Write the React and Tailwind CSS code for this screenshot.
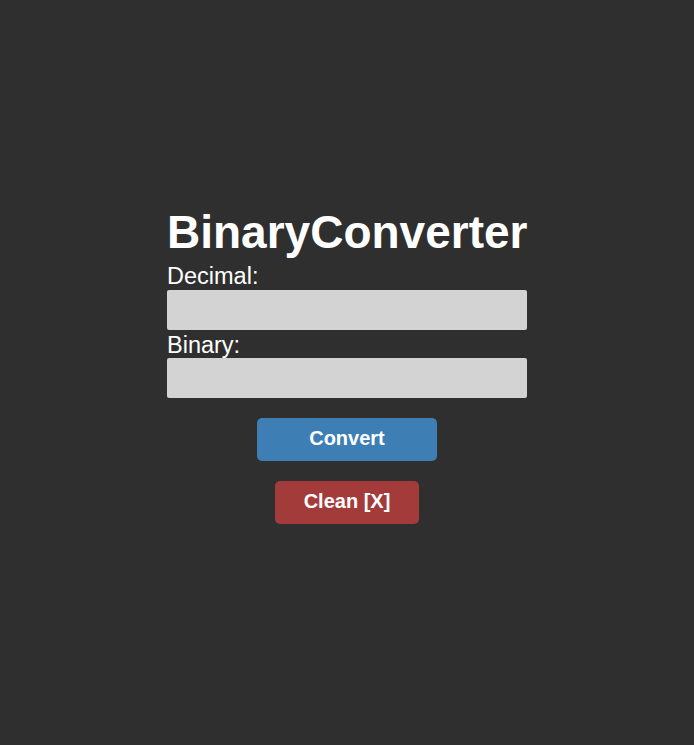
export default function App() {
  return (
    <div className="min-h-screen w-full bg-[#2f2f2f] text-white font-['Liberation_Sans',Arial,sans-serif]">
      <div className="flex flex-col items-center pt-[206px]">
        <div className="flex w-[360px] flex-col">
          <h1 className="text-[46px] font-bold leading-[52px]">BinaryConverter</h1>
          <label className="mt-[5px] text-[23.5px] leading-[26px]">Decimal:</label>
          <input className="mt-[1px] h-[40px] w-[360px] rounded-[2px] bg-[#d3d3d3] outline-none" />
          <label className="mt-[2px] text-[23.5px] leading-[26px]">Binary:</label>
          <input className="mt-0 h-[40px] w-[360px] rounded-[2px] bg-[#d3d3d3] outline-none" />
        </div>
        <button className="mt-[20px] h-[43px] w-[180px] rounded-[5px] bg-[#3d7fb5] pb-[3px] text-[20px] font-bold text-white">
          Convert
        </button>
        <button className="mt-[20px] h-[43px] w-[144px] rounded-[5px] bg-[#a43b3b] pb-[3px] text-[20px] font-bold text-white">
          Clean [X]
        </button>
      </div>
    </div>
  );
}
